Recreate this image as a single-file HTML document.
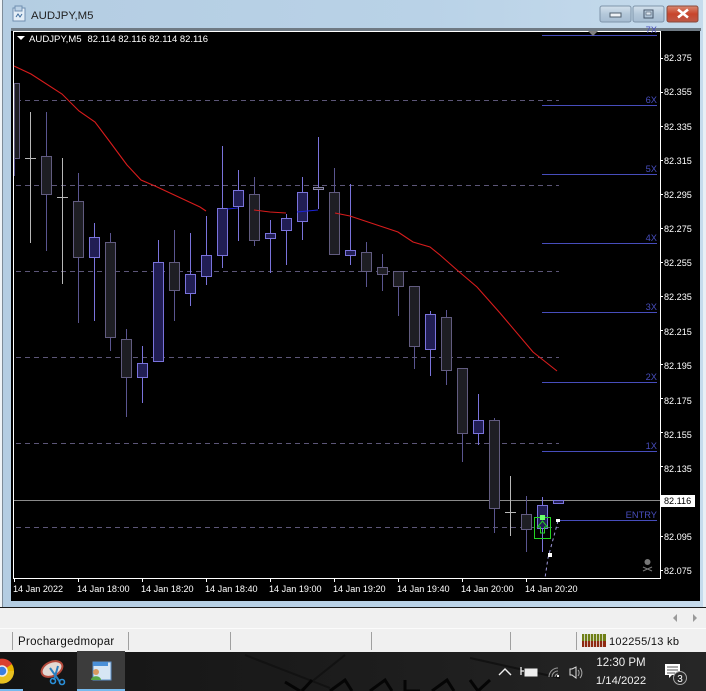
<!DOCTYPE html>
<html><head><meta charset="utf-8">
<style>
html,body{margin:0;padding:0;background:#f0f0f0}
#r{position:relative;width:706px;height:691px;overflow:hidden}
svg{position:absolute;left:0;top:0}
text{font-family:"Liberation Sans",sans-serif}
</style></head><body><div id="r">
<svg width="706" height="691" viewBox="0 0 706 691" xmlns="http://www.w3.org/2000/svg">
<defs>
<linearGradient id="ti2" x1="0" y1="0" x2="1" y2="0"><stop offset="0" stop-color="#b4cde2"/><stop offset=".6" stop-color="#b9d2e7"/><stop offset="1" stop-color="#c6dbec"/></linearGradient>
<linearGradient id="bt" x1="0" y1="0" x2="0" y2="1"><stop offset="0" stop-color="#d3e0ec"/><stop offset=".5" stop-color="#b4c8da"/><stop offset="1" stop-color="#a5bcd1"/></linearGradient>
<linearGradient id="cl" x1="0" y1="0" x2="0" y2="1"><stop offset="0" stop-color="#d98a72"/><stop offset=".5" stop-color="#c8452c"/><stop offset="1" stop-color="#bd5a48"/></linearGradient>
<linearGradient id="tb" x1="0" y1="0" x2="1" y2="0"><stop offset="0" stop-color="#141414"/><stop offset=".5" stop-color="#1c1c1c"/><stop offset="1" stop-color="#262626"/></linearGradient>
</defs>
<!-- window frame -->
<rect x="0" y="0" width="706" height="608" fill="url(#ti2)"/>
<rect x="0" y="0" width="2" height="607" fill="#f0f4f7"/>
<rect x="2" y="0" width="1" height="607" fill="#7e8c98"/>
<rect x="703" y="0" width="3" height="607" fill="#e8eff5"/>
<rect x="11" y="28" width="690" height="3" fill="#6f7a84"/>
<!-- title -->
<rect x="13" y="8" width="12" height="13" fill="#e4eef7" stroke="#6f8fb0" stroke-width="1"/>
<rect x="15" y="6" width="7" height="5" fill="#bcd2e6" stroke="#6f8fb0"/>
<path d="M16 17l2-3 2 3 2-3" stroke="#3e6c9c" fill="none"/>
<text x="31" y="19" font-size="11.4" fill="#222">AUDJPY,M5</text>
<!-- buttons -->
<rect x="600" y="6" width="31" height="16" rx="2" fill="url(#bt)" stroke="#7f95aa"/>
<rect x="633" y="6" width="31" height="16" rx="2" fill="url(#bt)" stroke="#7f95aa"/>
<rect x="667" y="6" width="31" height="16" rx="2" fill="url(#cl)" stroke="#8a4a3c"/>
<rect x="610" y="13" width="11" height="4" fill="#eef2f6" stroke="#4f5f6e"/>
<rect x="644" y="10" width="9" height="8" fill="none" stroke="#46566a"/>
<rect x="646" y="12" width="5" height="3" fill="#dfe8f0" stroke="#46566a" stroke-width=".6"/>
<path d="M678 9.500l10 8M688 9.500l-10 8" stroke="#fff" stroke-width="2.6"/>
<!-- chart -->
<rect x="11" y="31" width="689" height="570" fill="#000"/>
<rect x="14" y="31" width="646" height="1" fill="#fff"/>
<rect x="13" y="31" width="1" height="548" fill="#fff"/>
<rect x="660" y="31" width="1" height="548" fill="#fff"/>
<rect x="13" y="578" width="648" height="1" fill="#fff"/>
<g shape-rendering="crispEdges">
<!-- horizontal dashed -->
<g stroke="#5c5678" stroke-width="1" stroke-dasharray="5 4" fill="none">
<path d="M16 100.500H559M16 185.500H559M16 271.500H559M16 357.500H559M16 443.500H559M16 527.500H559"/>
</g>
<!-- fib lines -->
<g stroke="#474dbc" stroke-width="1" fill="none">
<path d="M542 35.500H657M542 105.500H657M542 174.500H657M542 243.500H657M542 312.500H657M542 382.500H657M542 451.500H657M558 520.500H657"/>
</g>
<!-- price line -->
<path d="M14 500.500H660" stroke="#8a8a8a" stroke-width="1"/>
<!-- bear wicks -->
<g stroke="#5a5590" stroke-width="1" fill="none">
<path d="M14.500 83V176M46.500 112V251M78.500 173V323M110.500 233V351M126.500 329V417M174.500 230V321M254.500 177V246M334.500 168V255M366.500 242V287M382.500 254V291M398.500 271V316M414.500 286V369M446.500 310V385M462.500 368V462M494.500 418V533M526.500 496V552"/>
</g>
<!-- bull wicks -->
<g stroke="#7a73dc" stroke-width="1" fill="none">
<path d="M94.500 223V321M142.500 346V403M158.500 240V362M190.500 233V306M206.500 216V285M222.500 146V268M238.500 170V241M270.500 220V273M286.500 214V265M302.500 177V240M318.500 137V209M350.500 184V265M430.500 311V376M478.500 394V445M542.500 497V552"/>
</g>
<!-- doji wicks -->
<g stroke="#b8b8b8" stroke-width="1" fill="none">
<path d="M30.500 112V243M62.500 158V284M510.500 476V536M25 158.500H36M57 197.500H68M505 512.500H516"/>
</g>
<!-- bear bodies -->
<g fill="#1e1e24" stroke="#625c80" stroke-width="1">
<rect x="14.500" y="83.500" width="5" height="75"/>
<rect x="41.500" y="156.500" width="10" height="38"/>
<rect x="73.500" y="201.500" width="10" height="56"/>
<rect x="105.500" y="242.500" width="10" height="95"/>
<rect x="121.500" y="339.500" width="10" height="38"/>
<rect x="169.500" y="262.500" width="10" height="28"/>
<rect x="249.500" y="194.500" width="10" height="46"/>
<rect x="329.500" y="192.500" width="10" height="62"/>
<rect x="361.500" y="252.500" width="10" height="19"/>
<rect x="377.500" y="267.500" width="10" height="7"/>
<rect x="393.500" y="271.500" width="10" height="15"/>
<rect x="409.500" y="286.500" width="10" height="60"/>
<rect x="441.500" y="317.500" width="10" height="53"/>
<rect x="457.500" y="368.500" width="10" height="65"/>
<rect x="489.500" y="420.500" width="10" height="88"/>
<rect x="521.500" y="514.500" width="10" height="15"/>
</g>
<!-- bull bodies -->
<g fill="#211e54" stroke="#7a73dc" stroke-width="1">
<rect x="89.500" y="237.500" width="10" height="20"/>
<rect x="137.500" y="363.500" width="10" height="14"/>
<rect x="153.500" y="262.500" width="10" height="99"/>
<rect x="185.500" y="274.500" width="10" height="19"/>
<rect x="201.500" y="255.500" width="10" height="21"/>
<rect x="217.500" y="208.500" width="10" height="47"/>
<rect x="233.500" y="190.500" width="10" height="16"/>
<rect x="265.500" y="233.500" width="10" height="5"/>
<rect x="281.500" y="218.500" width="10" height="12"/>
<rect x="297.500" y="192.500" width="10" height="29"/>
<rect x="345.500" y="250.500" width="10" height="5"/>
<rect x="425.500" y="314.500" width="10" height="35"/>
<rect x="473.500" y="420.500" width="10" height="13"/>
<rect x="537.500" y="505.500" width="10" height="23"/>
<rect x="553.500" y="500.500" width="10" height="3"/>
</g>
<rect x="313.500" y="187.500" width="10" height="2" fill="#1c1c22" stroke="#8a86a8"/>
</g>
<!-- MA -->
<path d="M14 66L31 74L62 94L79 111L95 122L110 142L127 165L141 180L155 186L200 207L206 211" fill="none" stroke="#d81c1c" stroke-width="1.1"/>
<path d="M254 210L270 212L286 213" fill="none" stroke="#d81c1c" stroke-width="1.1"/>
<path d="M227 209L238 208M297 212L318 210" fill="none" stroke="#1c22d8" stroke-width="1.1"/>
<path d="M335 213L350 216L380 226L398 232L413 242L430 247L440 255L457 270L477 287L500 313L533 352L557 371" fill="none" stroke="#d81c1c" stroke-width="1.1"/>
<!-- green signal -->
<g shape-rendering="crispEdges">
<rect x="534.500" y="517.500" width="16" height="21" fill="none" stroke="#22d422" stroke-width="1"/>
<rect x="540" y="515" width="5" height="5" fill="#6cff6c"/>
</g>
<path d="M542.500 521l-5 6h3v6h4v-6h3z" fill="none" stroke="#22d422" stroke-width="1"/>
<path d="M558 521L548 558L545 578" fill="none" stroke="#9c97d8" stroke-width="1" stroke-dasharray="3 3"/>
<rect x="548" y="553" width="4" height="4" fill="#fff"/>
<rect x="556" y="519" width="4" height="3" fill="#fff"/>
<!-- skull -->
<circle cx="647.500" cy="562" r="3" fill="#777"/>
<path d="M643 567l9 4M652 567l-9 4" stroke="#777" stroke-width="1.2"/>
<!-- triangle -->
<path d="M588 31h10l-5 5z" fill="#7f7f7f"/>
<!-- fib labels -->
<g font-size="9.300" fill="#474dbc" text-anchor="end">
<text x="657" y="33">7X</text>
<text x="657" y="103">6X</text>
<text x="657" y="172">5X</text>
<text x="657" y="241">4X</text>
<text x="657" y="310">3X</text>
<text x="657" y="380">2X</text>
<text x="657" y="449">1X</text>
<text x="657" y="518">ENTRY</text>
</g>
<!-- legend -->
<path d="M17 36h8l-4 4z" fill="#fff"/>
<text x="29" y="42" font-size="9.600" fill="#fff">AUDJPY,M5</text>
<text x="87.500" y="42" font-size="9.450" fill="#fff">82.114 82.116 82.114 82.116</text>
<!-- price axis -->
<g stroke="#fff" stroke-width="1" shape-rendering="crispEdges">
<path d="M660 58.500h3M660 92.500h3M660 126.500h3M660 160.500h3M660 194.500h3M660 228.500h3M660 262.500h3M660 296.500h3M660 330.500h3M660 364.500h3M660 398.500h3M660 432.500h3M660 466.500h3M660 500.500h3M660 536.500h3M660 570.500h3"/>
</g>
<g font-size="9.100" fill="#fff">
<text x="664" y="61">82.375</text>
<text x="664" y="95">82.355</text>
<text x="664" y="130">82.335</text>
<text x="664" y="164">82.315</text>
<text x="664" y="198">82.295</text>
<text x="664" y="232">82.275</text>
<text x="664" y="266">82.255</text>
<text x="664" y="300">82.235</text>
<text x="664" y="335">82.215</text>
<text x="664" y="369">82.195</text>
<text x="664" y="404">82.175</text>
<text x="664" y="438">82.155</text>
<text x="664" y="472">82.135</text>
<text x="664" y="540">82.095</text>
<text x="664" y="574">82.075</text>
</g>
<rect x="661" y="495" width="34" height="12" fill="#fff"/>
<text x="664" y="504" font-size="9.100" fill="#000">82.116</text>
<!-- time axis -->
<g stroke="#fff" stroke-width="1" shape-rendering="crispEdges">
<path d="M14.500 579v3M78.500 579v3M142.500 579v3M206.500 579v3M270.500 579v3M334.500 579v3M398.500 579v3M462.500 579v3M526.500 579v3"/>
</g>
<g font-size="9.100" fill="#fff">
<text x="13" y="592">14 Jan 2022</text>
<text x="77" y="592">14 Jan 18:00</text>
<text x="141" y="592">14 Jan 18:20</text>
<text x="205" y="592">14 Jan 18:40</text>
<text x="269" y="592">14 Jan 19:00</text>
<text x="333" y="592">14 Jan 19:20</text>
<text x="397" y="592">14 Jan 19:40</text>
<text x="461" y="592">14 Jan 20:00</text>
<text x="525" y="592">14 Jan 20:20</text>
</g>
<!-- lower panel -->
<rect x="0" y="607" width="706" height="1" fill="#1a1a1a"/>
<rect x="0" y="608" width="706" height="44" fill="#f0f0f0"/>
<rect x="0" y="628" width="706" height="1" fill="#fbfbfb"/>
<path d="M677 614l-4 4 4 4zM693 614l4 4-4 4z" fill="#9a9a9a"/>
<g fill="#a0a0a0" shape-rendering="crispEdges">
<rect x="12" y="632" width="1" height="18"/>
<rect x="128" y="632" width="1" height="18"/>
<rect x="230" y="632" width="1" height="18"/>
<rect x="371" y="632" width="1" height="18"/>
<rect x="510" y="632" width="1" height="18"/>
<rect x="576" y="632" width="1" height="18"/>
</g>
<text x="18" y="645" font-size="11.500" letter-spacing=".3" fill="#111">Prochargedmopar</text>
<!-- conn bars -->
<g shape-rendering="crispEdges">
<rect x="582" y="634" width="24" height="7" fill="#6f7f16"/>
<rect x="582" y="641" width="24" height="6" fill="#8f2a12"/>
<path d="M584.500 634v13M587.500 634v13M590.500 634v13M593.500 634v13M596.500 634v13M599.500 634v13M602.500 634v13" stroke="#f0f0f0" stroke-width="1" opacity=".75"/>
</g>
<text x="609" y="645" font-size="11" letter-spacing=".3" fill="#111">102255/13 kb</text>
<!-- taskbar -->
<rect x="0" y="652" width="706" height="39" fill="url(#tb)"/>
<path d="M245 655L330 688M345 655L300 691M470 658L560 678" stroke="#121212" stroke-width="2" fill="none"/>
<path d="M285 682L300 691M312 680L302 691M330 691L345 680L352 691M370 691L385 680L392 691M405 680V691H420M432 691L447 680L454 691M470 680L478 691L490 680" stroke="#050505" stroke-width="3" fill="none"/>
<!-- chrome -->
<circle cx="2" cy="671" r="12" fill="#e8b400"/>
<path d="M2 671L-10 671A12 12 0 0 1 12 664z" fill="#d9402f"/>
<path d="M2 671L14 671A12 12 0 0 1 -4 682z" fill="#e8c020"/>
<circle cx="2" cy="671" r="5" fill="#3a7ee0" stroke="#eee" stroke-width="1.500"/>
<rect x="0" y="689" width="23" height="2" fill="#76b9ed"/>
<!-- snipping -->
<ellipse cx="52" cy="669" rx="11" ry="7" transform="rotate(-25 52 669)" fill="#e3d9d4" stroke="#b44a3c" stroke-width="2"/>
<path d="M50 668L60 682M58 666L54 680" stroke="#2a7fc0" stroke-width="2"/>
<circle cx="53" cy="681" r="2.500" fill="none" stroke="#2a8fd8" stroke-width="1.600"/>
<circle cx="62" cy="682" r="2.500" fill="none" stroke="#2a8fd8" stroke-width="1.600"/>
<!-- active app -->
<rect x="77" y="651" width="48" height="40" fill="#3c3c3c"/>
<rect x="77" y="689" width="48" height="2" fill="#76b9ed"/>
<rect x="93" y="662" width="18" height="18" fill="#d6e6f4" stroke="#5b8fc8"/>
<rect x="93" y="662" width="15" height="4" fill="#4a90d8"/>
<circle cx="96" cy="672" r="3" fill="#d89a60"/>
<path d="M91 680c0-5 10-5 10 0z" fill="#58a848"/>
<!-- tray -->
<path d="M499 675l6-6 6 6" fill="none" stroke="#eee" stroke-width="1.400"/>
<rect x="525" y="669" width="12" height="7" fill="#eee" stroke="#eee"/>
<path d="M521 667v8M524 671h-3" stroke="#eee" stroke-width="1.300"/>
<path d="M549 677a9 9 0 0 1 9-9M552 677a6 6 0 0 1 6-6M555 677a3 3 0 0 1 3-3" fill="none" stroke="#999" stroke-width="1.100"/>
<rect x="557" y="675" width="2" height="2" fill="#eee"/>
<path d="M570 669v6h2l4 3v-11l-4 2z" fill="none" stroke="#ddd" stroke-width="1"/>
<path d="M578 670c1.500 1.500 1.500 4 0 6M580 668c2.500 3 2.500 7 0 10" fill="none" stroke="#aaa"/>
<text x="621" y="666" font-size="11.500" text-anchor="middle" fill="#f0f0f0">12:30 PM</text>
<text x="621" y="684" font-size="11.300" text-anchor="middle" fill="#f0f0f0">1/14/2022</text>
<path d="M665 664h15v11h-8l-3 3v-3h-4z" fill="#fff"/>
<path d="M667 667h11M667 670h11M667 673h8" stroke="#555" stroke-width="1"/>
<circle cx="680" cy="678" r="6.500" fill="#2a2a2a" stroke="#aaa"/>
<text x="680" y="682" font-size="10" text-anchor="middle" fill="#fff">3</text>
</svg>
</div></body></html>
